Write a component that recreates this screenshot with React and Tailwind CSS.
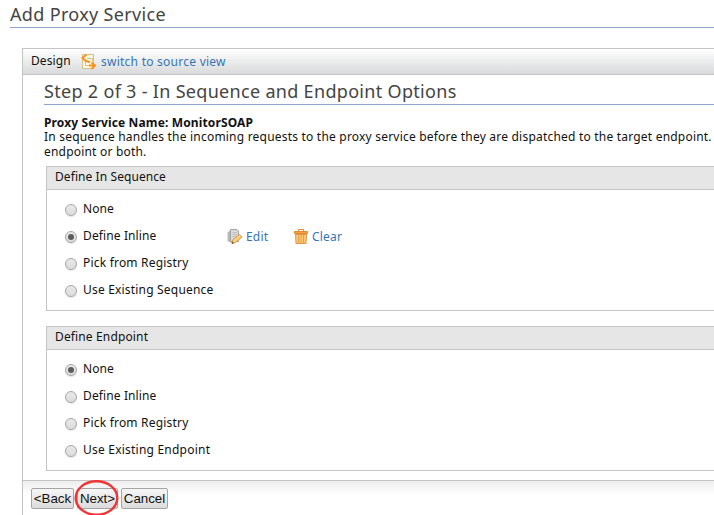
import React from "react";

function Radio({ checked }) {
  return (
    <span className="mt-[9px] flex h-3 w-3 shrink-0 items-center justify-center rounded-full border border-[#a6a6a6] bg-linear-to-b from-[#e9e9e9] to-[#dcdcdc] shadow-[0_1px_1px_rgba(0,0,0,0.12)]">
      {checked && <span className="h-[6px] w-[6px] rounded-full bg-[#5c5c5c]" />}
    </span>
  );
}

function Option({ label, checked, spacing, children }) {
  return (
    <div className="flex h-[27px] items-start pl-[18px]">
      <Radio checked={checked} />
      <span className={`ml-[6px] mt-[5px] leading-[18px] ${spacing}`}>{label}</span>
      {children}
    </div>
  );
}

function SwitchIcon() {
  return (
    <svg className="ml-[10px] mt-[5px] shrink-0" width="16" height="16" viewBox="0 0 16 16" fill="none">
      <path d="M1.5.5h11v14h-11z" fill="#fdf8e6" stroke="#d3c189" />
      <path d="M6 4.5h5.500v3M4.500 8v3.500H9" stroke="#dfbd78" />
      <path d="M5.500 .8 1.500 3.800l3 3L9 8.200" stroke="#f7931e" strokeWidth="2" />
      <path d="M8 11.500h5M10.500 8.500l3.500 3-3.500 3.500" stroke="#f7931e" strokeWidth="2" />
    </svg>
  );
}

function EditIcon() {
  return (
    <svg className="mt-[7px] shrink-0" width="16" height="16" viewBox="0 0 16 16">
      <path d="M.5 3.500 3.500 1v10.500l3 1.500-1 1.500-5-2.500z" fill="#b9b9b9" />
      <path d="M3.500 .5h6.500L11.500 2v10.500h-8z" fill="#dadada" stroke="#a3a3a3" />
      <path d="M5.500 3.500H10M5.500 5.500H10M5.500 7.500H9" stroke="#bebebe" />
      <path d="m6 10.500 6.500-5 2.500 2.500-6.500 5.500-3.500 1z" fill="#fbd27c" stroke="#d49a42" />
      <path d="m5.300 12.500 1.700 1.600-2.200.8z" fill="#71512f" />
    </svg>
  );
}

function TrashIcon() {
  return (
    <svg className="mt-[7px] shrink-0" width="14" height="16" viewBox="0 0 14 16">
      <path d="M4.500 2.500v-2h5v2" fill="none" stroke="#df8933" />
      <path d="M.5 2.500h13v2H.5z" fill="#f3a345" stroke="#e28a30" />
      <path d="M1.500 5.500h11l-.5 9H2z" fill="#fac878" stroke="#e59640" />
      <path d="M4.500 6v8M7 6v8M9.500 6v8" stroke="#e99e49" />
    </svg>
  );
}

function Group({ title, spacing, children }) {
  return (
    <section className="ml-[23px] h-[145px] border border-r-0 border-[#c4c4c4]">
      <h3 className={`h-[23px] border-b border-[#c4c4c4] bg-[#e6e6e6] pl-2 leading-[19px] ${spacing}`}>{title}</h3>
      <div className="pt-[5px]">{children}</div>
    </section>
  );
}

function Button({ children, width }) {
  return (
    <button className={`h-[21px] rounded-[2px] border border-[#a5a5a5] bg-linear-to-b from-[#f6f6f6] to-[#dcdcdc] text-center font-['Liberation_Sans',sans-serif] text-[13.33px] leading-[19px] whitespace-nowrap ${width}`}>
      {children}
    </button>
  );
}

export default function App() {
  return (
    <main className="h-[515px] w-[714px] overflow-hidden bg-white font-['Noto_Sans',sans-serif] text-[12px] text-[#111]">
      <h1 className="ml-[10px] h-[28px] border-b border-[#8fa3cc] text-[18px] leading-[29px] tracking-[0.34px] text-[#444]">Add Proxy Service</h1>
      <div className="ml-[22px] mt-[20px] h-[467px] border-l border-t border-[#c4c4c4]">
        <header className="flex h-[26px] border-b border-[#c4c4c4] bg-linear-to-b from-white to-[#d8dadb] pl-2">
          <span className="w-[40px] leading-[24px] tracking-[0.1px]">Design</span>
          <SwitchIcon />
          <a className="ml-[4px] leading-[26px] tracking-[0.25px] text-[#3674b8]">switch to source view</a>
        </header>
        <div className="h-[405px]">
          <h2 className="ml-[21px] h-[30px] border-b border-[#8fa3cc] text-[18px] leading-[33px] tracking-[0.31px] text-[#444]">Step 2 of 3 - In Sequence and Endpoint Options</h2>
          <div className="ml-[21px] h-[61px] pt-[10px] leading-[15px] whitespace-nowrap">
            <p className="h-[14px] leading-[16px] tracking-[0.13px] font-bold">Proxy Service Name: MonitorSOAP</p>
            <p className="tracking-[0.207px]">In sequence handles the incoming requests to the proxy service before they are dispatched to the target endpoint.</p>
            <p className="tracking-[0.2px]">endpoint or both.</p>
          </div>
          <Group title="Define In Sequence" spacing="tracking-[0.08px]">
            <Option label="None" spacing="tracking-[0.1px]" />
            <Option label="Define Inline" checked spacing="w-[144px] tracking-[0.12px]">
              <EditIcon />
              <a className="ml-[3px] mt-[6px] w-[48px] leading-[18px] tracking-[0.2px] text-[#3674b8]">Edit</a>
              <TrashIcon />
              <a className="ml-[4px] mt-[6px] leading-[18px] tracking-[0.2px] text-[#3674b8]">Clear</a>
            </Option>
            <Option label="Pick from Registry" spacing="tracking-[0.2px]" />
            <Option label="Use Existing Sequence" spacing="tracking-[0.19px]" />
          </Group>
          <div className="h-[15px]" />
          <Group title="Define Endpoint" spacing="tracking-[0.14px]">
            <Option label="None" checked spacing="tracking-[0.1px]" />
            <Option label="Define Inline" spacing="tracking-[0.12px]" />
            <Option label="Pick from Registry" spacing="tracking-[0.2px]" />
            <Option label="Use Existing Endpoint" spacing="tracking-[0.22px]" />
          </Group>
        </div>
        <footer className="relative flex h-[35px] items-start gap-[3px] border-t border-[#c4c4c4] bg-linear-to-b from-[#eee] to-white to-40% pl-2 pt-[7px]">
          <Button width="w-[43px]">&lt;Back</Button>
          <Button width="w-[41px]">Next&gt;</Button>
          <Button width="w-[47px]">Cancel</Button>
          <svg className="absolute left-[51px] top-[-1px]" width="46" height="36" fill="none">
            <ellipse cx="22.500" cy="18" rx="20.800" ry="16.800" stroke="#f03636" strokeWidth="2.500" />
          </svg>
        </footer>
      </div>
    </main>
  );
}
